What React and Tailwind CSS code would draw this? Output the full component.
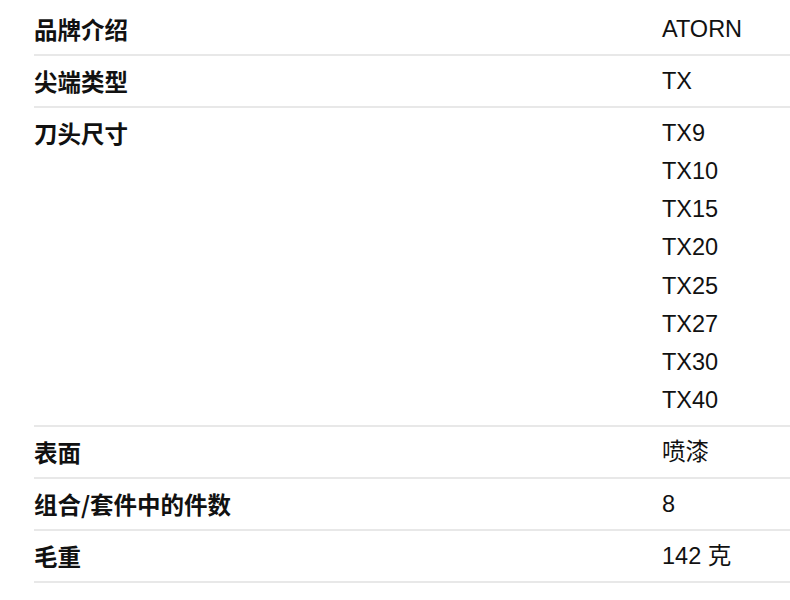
import React from 'react';

const rows = [
  { label: '品牌介绍', values: ['ATORN'] },
  { label: '尖端类型', values: ['TX'] },
  { label: '刀头尺寸', values: ['TX9', 'TX10', 'TX15', 'TX20', 'TX25', 'TX27', 'TX30', 'TX40'] },
  { label: '表面', values: ['喷漆'] },
  { label: '组合/套件中的件数', values: ['8'] },
  { label: '毛重', values: ['142 克'] },
];

const App = () => {
  return (
    <div className="bg-white min-h-[600px] pl-[34px] pt-[4px] text-[23.5px] leading-[38.1px] text-[#111]" style={{ fontFamily: '"Liberation Sans", "Noto Sans CJK SC", sans-serif' }}>
      {rows.map((row) => (
        <div key={row.label} className="flex border-b-2 border-[#e8e8e8] py-[6px]">
          <div className="w-[628px] shrink-0 font-bold" style={{ fontFamily: '"Noto Sans CJK SC", sans-serif' }}>
            {row.label}
          </div>
          <div className="flex flex-col">
            {row.values.map((v) => (
              <span key={v}>{v}</span>
            ))}
          </div>
        </div>
      ))}
    </div>
  );
};

export default App;
